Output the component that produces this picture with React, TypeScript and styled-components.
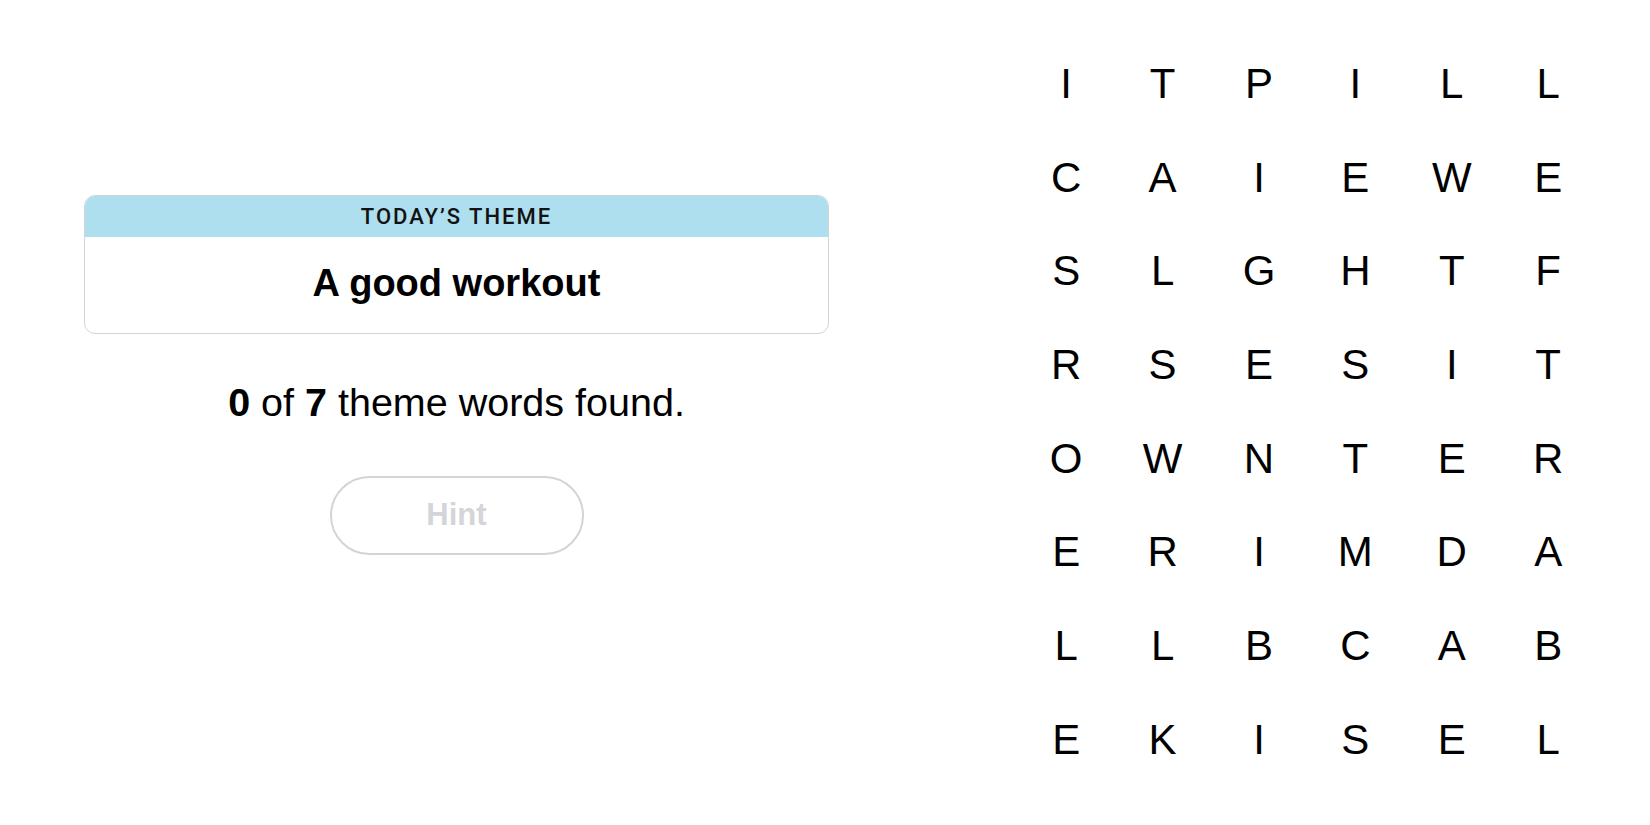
import React from 'react';
import styled, { createGlobalStyle } from 'styled-components';

const GlobalStyle = createGlobalStyle`
  html, body {
    margin: 0;
    padding: 0;
    background: #ffffff;
  }
  body {
    font-family: "Liberation Sans", Arial, sans-serif;
    color: #000000;
  }
`;

const Page = styled.main`
  display: flex;
  align-items: flex-start;
  width: 1650px;
  height: 825px;
  padding-left: 84px;
  gap: 189px;
  box-sizing: border-box;
  overflow: hidden;
`;

const InfoPanel = styled.section`
  width: 745px;
  padding-top: 195px;
  display: flex;
  flex-direction: column;
  align-items: center;
`;

const ThemeCard = styled.div`
  width: 100%;
  border: 1.5px solid #d4d4d4;
  border-radius: 11px;
  overflow: hidden;
  box-sizing: border-box;
`;

const ThemeHeader = styled.div`
  height: 41px;
  background: #aedfee;
  display: flex;
  align-items: center;
  justify-content: center;
  font-family: Roboto, "Liberation Sans", sans-serif;
  font-size: 22px;
  font-weight: 500;
  letter-spacing: 2px;
  text-transform: uppercase;
  color: #121212;
`;

const ThemeTitle = styled.h1`
  margin: 0;
  padding: 24px 0 26px;
  text-align: center;
  font-size: 38px;
  line-height: 1.2;
  font-weight: 700;
  color: #000000;
`;

const Progress = styled.p`
  margin: 45px 0 0;
  font-size: 39.5px;
  line-height: 1.2;
  text-align: center;

  b {
    font-weight: 700;
  }
`;

const HintButton = styled.button`
  margin-top: 50px;
  width: 254px;
  height: 79px;
  border: 2px solid #d4d4d4;
  border-radius: 40px;
  background: #ffffff;
  font-family: "Liberation Sans", Arial, sans-serif;
  font-size: 31px;
  font-weight: 700;
  color: #d3d5d9;
  cursor: default;
`;

const Board = styled.div`
  margin-top: 37px;
  display: grid;
  grid-template-columns: repeat(6, 96.4px);
  grid-auto-rows: 93.7px;
`;

const Letter = styled.div`
  display: flex;
  align-items: center;
  justify-content: center;
  font-size: 42px;
  color: #000000;
  user-select: none;
`;

const rows = [
  'ITPILL',
  'CAIEWE',
  'SLGHTF',
  'RSESIT',
  'OWNTER',
  'ERIMDA',
  'LLBCAB',
  'EKISEL',
];

export default function App() {
  return (
    <>
      <GlobalStyle />
      <Page>
        <InfoPanel>
          <ThemeCard>
            <ThemeHeader>Today’s Theme</ThemeHeader>
            <ThemeTitle>A good workout</ThemeTitle>
          </ThemeCard>
          <Progress>
            <b>0</b> of <b>7</b> theme words found.
          </Progress>
          <HintButton disabled>Hint</HintButton>
        </InfoPanel>
        <Board>
          {rows.map((row, r) =>
            row.split('').map((ch, c) => <Letter key={`${r}-${c}`}>{ch}</Letter>)
          )}
        </Board>
      </Page>
    </>
  );
}
